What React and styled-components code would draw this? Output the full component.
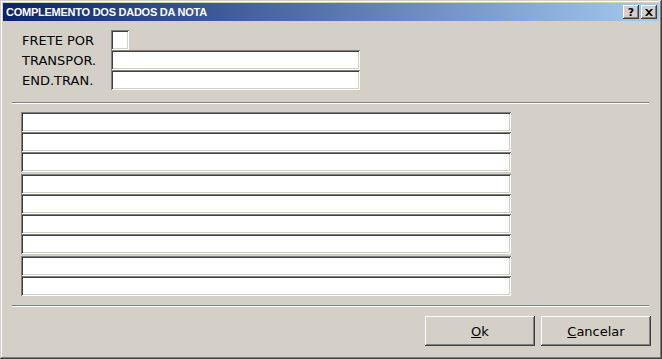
import styled, { createGlobalStyle } from "styled-components";

const GlobalStyle = createGlobalStyle`
    html, body {
        margin: 0;
        padding: 0;
        background: #d4d0c8;
    }
    * {
        box-sizing: border-box;
    }
`;

const rowGroups = [3, 4, 2];

const App = () => {
    return (
        <>
            <GlobalStyle />
            <Window>
                <TitleBar>
                    <Title>COMPLEMENTO DOS DADOS DA NOTA</Title>
                    <TitleButtons>
                        <CaptionButton>?</CaptionButton>
                        <CaptionButton>
                            <svg width="8" height="7" viewBox="0 0 8 7">
                                <path d="M0 0h2l2 2 2-2h2L5 3.5 8 7H6L4 5 2 7H0l3-3.5z" fill="#000" />
                            </svg>
                        </CaptionButton>
                    </TitleButtons>
                </TitleBar>

                <Body>
                    <Form>
                        <Label>FRETE POR</Label>
                        <Field $width={18} />
                        <Label>TRANSPOR.</Label>
                        <Field $width={249} />
                        <Label>END.TRAN.</Label>
                        <Field $width={249} />
                    </Form>

                    <Separator $top={12} />

                    <Lines>
                        {rowGroups.map((count, g) => (
                            <LineGroup key={g}>
                                {Array.from({ length: count }).map((_, i) => (
                                    <Field key={i} $width={490} />
                                ))}
                            </LineGroup>
                        ))}
                    </Lines>

                    <Separator $top={9} />

                    <Actions>
                        <Button><u>O</u>k</Button>
                        <Button><u>C</u>ancelar</Button>
                    </Actions>
                </Body>
            </Window>
        </>
    );
};

const Window = styled.div`
    width: 662px;
    height: 359px;
    padding: 3px;
    display: flex;
    flex-direction: column;
    background: #d4d0c8;
    box-shadow:
        inset -1px -1px #404040,
        inset 1px 1px #d4d0c8,
        inset -2px -2px #808080,
        inset 2px 2px #ffffff;
`;

const TitleBar = styled.div`
    height: 18px;
    display: flex;
    align-items: center;
    justify-content: space-between;
    padding: 0 2px 0 3px;
    background: linear-gradient(to right, #0a246a, #a6caf0);
`;

const Title = styled.span`
    font-family: "Liberation Sans", Arial, sans-serif;
    font-weight: bold;
    font-size: 11px;
    letter-spacing: -0.25px;
    color: #ffffff;
    white-space: nowrap;
`;

const TitleButtons = styled.div`
    display: flex;
    gap: 2px;
`;

const CaptionButton = styled.div`
    width: 16px;
    height: 14px;
    display: flex;
    align-items: center;
    justify-content: center;
    background: #d4d0c8;
    font-family: "DejaVu Sans", sans-serif;
    font-weight: bold;
    font-size: 11px;
    line-height: 1;
    color: #000;
    box-shadow:
        inset -1px -1px #404040,
        inset 1px 1px #ffffff,
        inset -2px -2px #808080,
        inset 2px 2px #d4d0c8;
`;

const Body = styled.div`
    flex: 1;
    display: flex;
    flex-direction: column;
`;

const Form = styled.div`
    display: grid;
    grid-template-columns: 89px auto;
    grid-auto-rows: 20px;
    align-items: center;
    margin: 9px 0 0 19px;
`;

const Label = styled.span`
    font-family: "DejaVu Sans", sans-serif;
    font-size: 13px;
    color: #000;
`;

const Field = styled.div`
    width: ${(p) => p.$width}px;
    height: 20px;
    background: #ffffff;
    box-shadow:
        inset 1px 1px #808080,
        inset -1px -1px #ffffff,
        inset 2px 2px #404040,
        inset -2px -2px #d4d0c8;
`;

const Separator = styled.div`
    width: 637px;
    height: 2px;
    margin: ${(p) => p.$top}px 0 0 9px;
    border-top: 1px solid #808080;
    border-bottom: 1px solid #ffffff;
`;

const Lines = styled.div`
    display: flex;
    flex-direction: column;
    gap: 2px;
    margin: 8px 0 0 18px;
`;

const LineGroup = styled.div`
    display: flex;
    flex-direction: column;
`;

const Actions = styled.div`
    display: flex;
    justify-content: flex-end;
    gap: 6px;
    margin-top: 9px;
    padding-right: 8px;
`;

const Button = styled.div`
    width: 110px;
    height: 30px;
    display: flex;
    align-items: center;
    justify-content: center;
    font-family: "DejaVu Sans", sans-serif;
    font-size: 13px;
    color: #000;
    background: #d4d0c8;
    box-shadow:
        inset -1px -1px #404040,
        inset 1px 1px #ffffff,
        inset -2px -2px #808080,
        inset 2px 2px #d4d0c8;
`;

export default App;
